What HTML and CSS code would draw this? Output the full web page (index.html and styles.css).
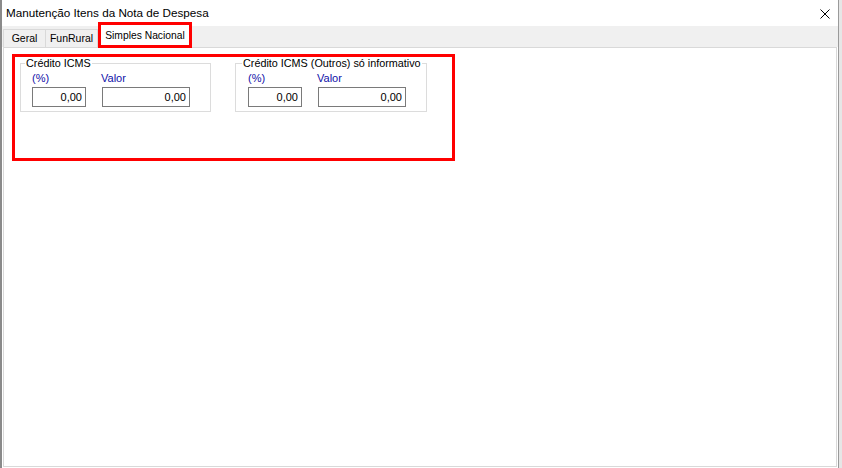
FILE: index.html
```html
<!DOCTYPE html>
<html lang="pt-BR">
<head>
  <meta charset="UTF-8" />
  <title>Manutenção Itens da Nota de Despesa</title>
  <link rel="stylesheet" href="styles.css">
</head>
<body>
  <div class="window">
    <div class="titlebar">
      <span class="title">Manutenção Itens da Nota de Despesa</span>
      <svg class="close" width="10" height="10" viewBox="0 0 10 10">
        <path d="M0.5 0.5 L9.5 9.5 M9.5 0.5 L0.5 9.5" stroke="#000" stroke-width="1" fill="none" />
      </svg>
    </div>
    <div class="tabs">
      <div class="tab tab-geral">Geral</div>
      <div class="tab tab-funrural">FunRural</div>
      <div class="tab active">Simples Nacional</div>
    </div>
    <div class="panel">
      <div class="highlight">
        <fieldset class="group g1">
          <legend>Crédito ICMS</legend>
          <div class="fields">
            <div class="field pct"><label>(%)</label><input type="text" value="0,00"></div>
            <div class="field val"><label>Valor</label><input type="text" value="0,00"></div>
          </div>
        </fieldset>
        <fieldset class="group g2">
          <legend>Crédito ICMS (Outros) só informativo</legend>
          <div class="fields">
            <div class="field pct"><label>(%)</label><input type="text" value="0,00"></div>
            <div class="field val"><label>Valor</label><input type="text" value="0,00"></div>
          </div>
        </fieldset>
      </div>
    </div>
  </div>
</body>
</html>
```

FILE: styles.css
```css
html, body {
  margin: 0;
  padding: 0;
}
body {
  width: 842px;
  height: 468px;
  overflow: hidden;
  background-color: #e6e6e6;
  font-family: 'Liberation Sans', Arial, sans-serif;
  color: #000;
}
.window {
  box-sizing: border-box;
  width: 839px;
  height: 468px;
  display: flex;
  flex-direction: column;
  background-color: #fff;
  border-left: 2px solid #8a8a8a;
  border-right: 1px solid #9a9a9a;
}
.titlebar {
  height: 26px;
  flex: none;
  display: flex;
  align-items: center;
  justify-content: space-between;
  padding-left: 4px;
  background-color: #fff;
}
.title {
  font-size: 11.7px;
  line-height: 26px;
  color: #000;
}
.close {
  margin-right: 8px;
  margin-top: 1px;
}
.tabs {
  height: 21px;
  flex: none;
  display: flex;
  align-items: flex-end;
  padding-left: 1px;
  background-color: #f0f0f0;
}
.tab {
  box-sizing: border-box;
  height: 18px;
  border: 1px solid #d9d9d9;
  border-bottom: none;
  background-color: #f0f0f0;
  font-size: 10.5px;
  line-height: 17px;
  text-align: center;
}
.tab-geral {
  width: 43px;
}
.tab-funrural {
  width: 53px;
  margin-left: -1px;
}
.tab.active {
  position: relative;
  width: 94px;
  height: 22px;
  line-height: 22px;
  font-size: 10.3px;
  background-color: #fff;
  border: none;
}
.tab.active::after {
  content: "";
  position: absolute;
  left: 0;
  right: 0;
  top: -3px;
  bottom: -1px;
  border: 3px solid #f00;
}
.panel {
  flex: 1;
  margin: 0 1px 1px 1px;
  border: 1px solid #d9d9d9;
  background-color: #fff;
}
.highlight {
  box-sizing: border-box;
  width: 443px;
  height: 107px;
  margin: 6px 0 0 8px;
  padding-left: 5px;
  border: 3px solid #f00;
  display: flex;
  align-items: flex-start;
  gap: 24px;
}
.group {
  box-sizing: border-box;
  margin: 0;
  padding: 0 0 4px 0;
  min-width: 0;
  border: 1px solid #dcdcdc;
}
.group legend {
  padding: 0 1px;
  font-size: 10.8px;
  line-height: 13px;
}
.g1 {
  width: 191px;
}
.g1 legend {
  margin-left: 4px;
}
.g2 {
  width: 192px;
}
.g2 legend {
  margin-left: 6px;
}
.fields {
  display: flex;
  gap: 16px;
  padding-left: 11px;
}
.g2 .fields {
  padding-left: 12px;
}
.field {
  display: flex;
  flex-direction: column;
}
.field label {
  margin-top: 1px;
  font-size: 11px;
  line-height: 14px;
  color: #1010a8;
}
.field.val label {
  margin-left: -1px;
}
.field input {
  box-sizing: border-box;
  height: 20px;
  margin: 2px 0 0 0;
  padding: 0 3px;
  border: 1px solid #7a7a7a;
  border-radius: 0;
  background-color: #fff;
  font-family: 'Liberation Sans', Arial, sans-serif;
  font-size: 11px;
  color: #000;
  text-align: right;
  outline: none;
}
.field.pct input {
  width: 54px;
}
.field.val input {
  width: 88px;
}
```
